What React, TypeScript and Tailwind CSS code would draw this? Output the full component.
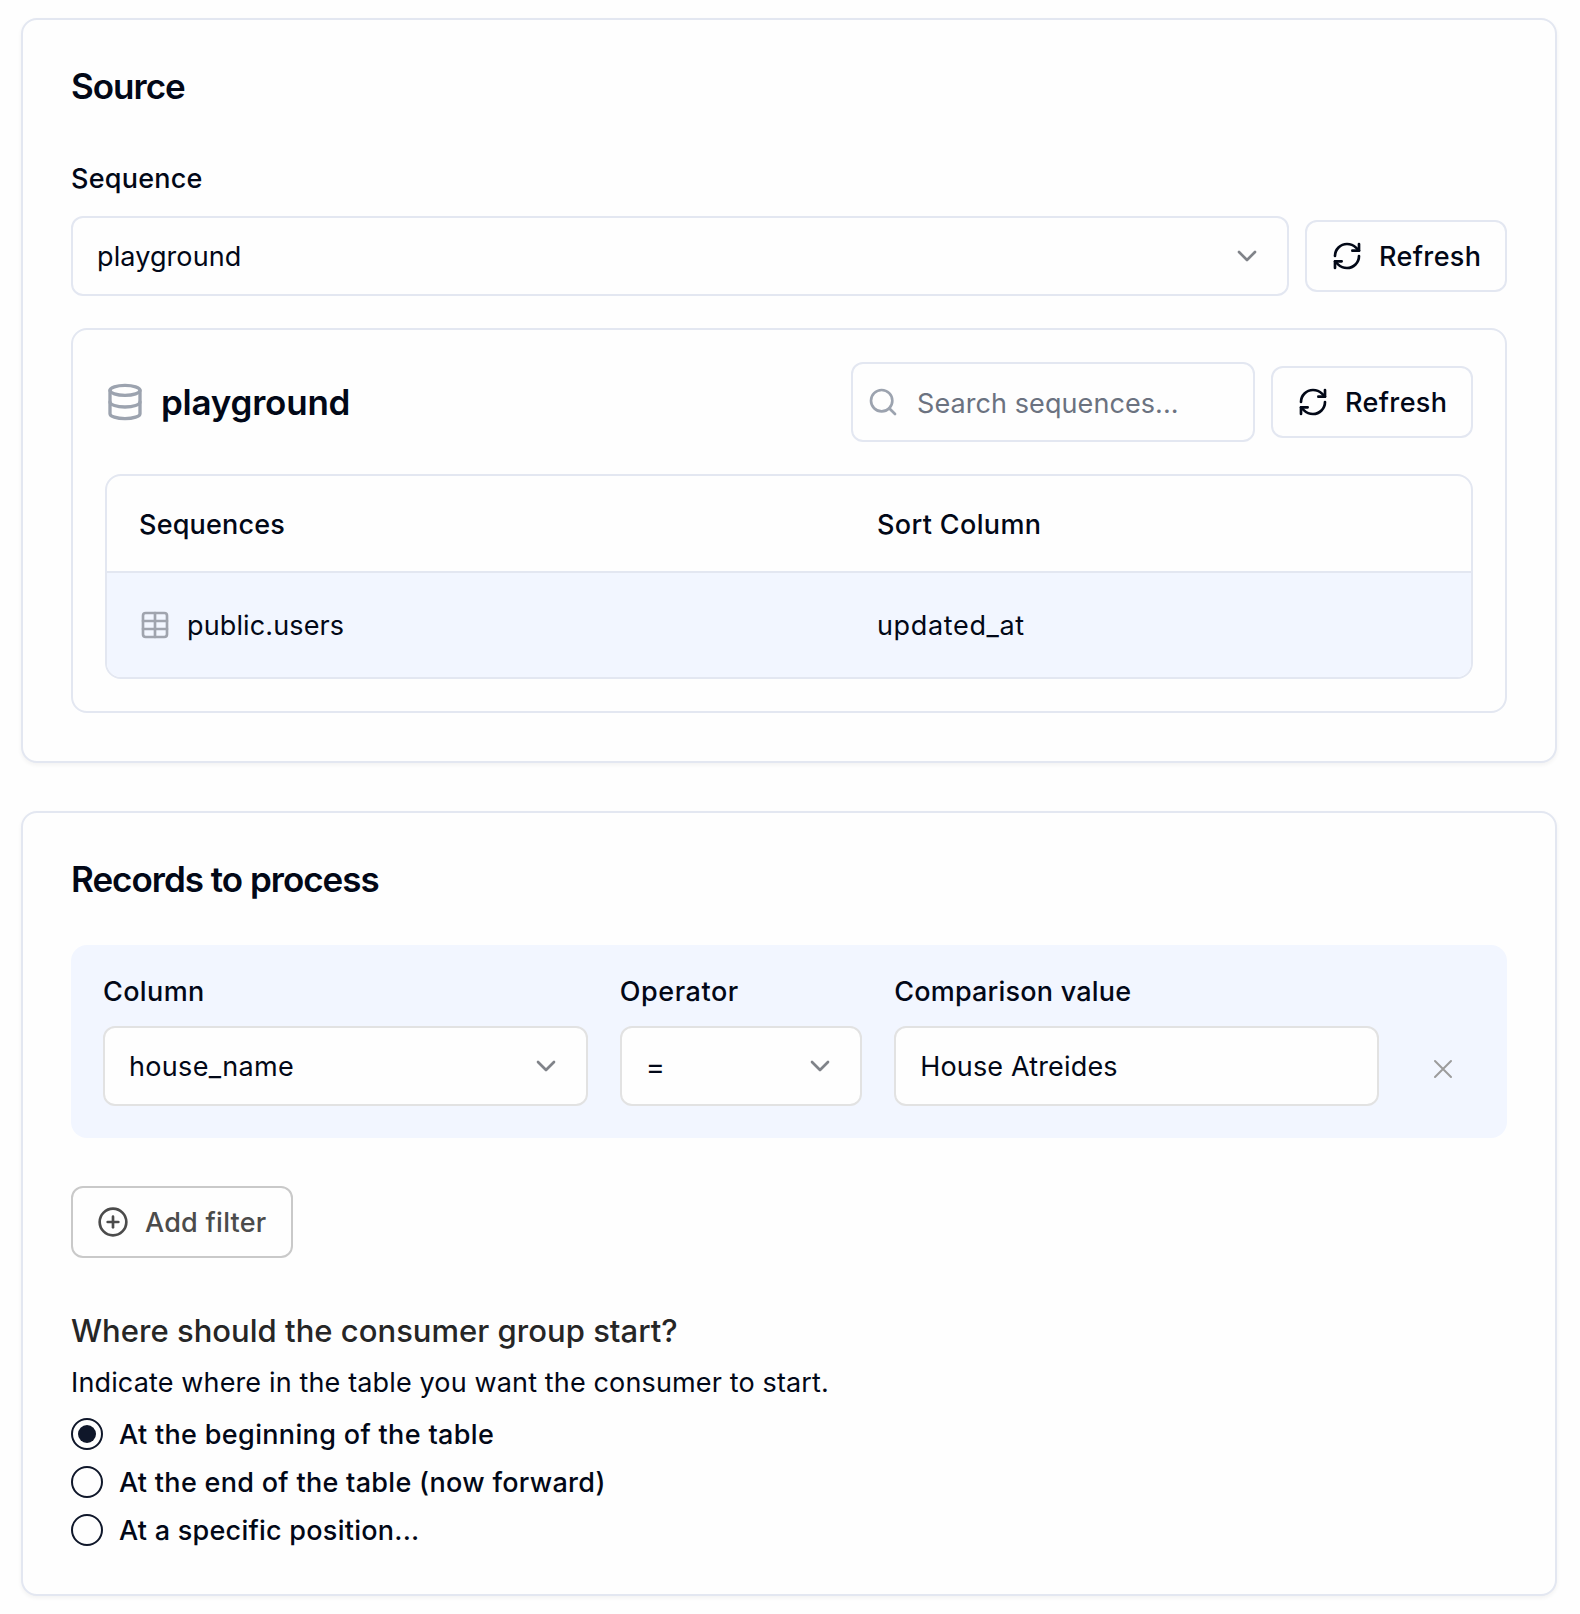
import type { ReactNode } from "react";
import { ChevronDown, CirclePlus, Database, RefreshCw, Search, Table } from "lucide-react";

function Card({ title, children }: { title: ReactNode; children: ReactNode }) {
  return (
    <section className="rounded-2xl border-2 border-[#e3e7f1] bg-[#fefefe] p-12 shadow-[0_2px_4px_rgba(0,0,0,0.05)]">
      {title}
      {children}
    </section>
  );
}

function RefreshButton() {
  return (
    <button className="flex h-[72px] w-[202px] shrink-0 items-center gap-4 rounded-xl border-2 border-[#e3e7f1] bg-[#fefefe] pl-6 font-medium tracking-[0.37px]">
      <RefreshCw size={32} className="shrink-0" />
      <span className="pt-0.5">Refresh</span>
    </button>
  );
}

function FilterSelect({ children }: { children: ReactNode }) {
  return (
    <div className="flex h-20 items-center justify-between rounded-xl border-2 border-[#e2e2e2] bg-[#fefefe] px-6">
      {children}
      <ChevronDown size={32} className="text-[#808389]" />
    </div>
  );
}

function RadioOption({ checked = false, children }: { checked?: boolean; children: ReactNode }) {
  return (
    <div role="radio" aria-checked={checked} className="flex h-8 items-center gap-4 font-medium">
      <span className="flex size-8 items-center justify-center rounded-full border-2 border-[#0f172a]">
        {checked && <span className="size-[18.67px] rounded-full bg-[#0f172a]" />}
      </span>
      {children}
    </div>
  );
}

export default function App() {
  return (
    <main className="flex h-[1614px] w-[1580px] flex-col gap-12 bg-[#fefefe] pt-[18px] pr-[23px] pl-[21px] font-['Inter',sans-serif] text-[27px] leading-7 text-[#020817]">
      <Card title={<h2 className="text-[35px] leading-9 font-semibold tracking-[-1px]">Source</h2>}>
        <div className="mt-[61px] font-medium tracking-[0.24px]">Sequence</div>
        <div className="mt-[23px] flex items-center gap-4">
          <div className="flex h-20 grow items-center justify-between rounded-xl border-2 border-[#e3e7f1] px-6">
            <span className="pt-0.5 tracking-[0.1px]">playground</span>
            <ChevronDown size={32} className="text-[#808389]" />
          </div>
          <RefreshButton />
        </div>

        <div className="mt-8 rounded-2xl border-2 border-[#e3e7f1] p-8">
          <div className="flex items-center">
            <Database size={40} className="text-[#9ca3af]" />
            <h3 className="ml-4 grow text-[35px] leading-10 font-semibold tracking-[-0.23px]">playground</h3>
            <div className="mr-4 flex h-20 w-[404px] items-center rounded-xl border-2 border-[#e3e7f1] pl-3.5">
              <Search size={32} className="text-[#9ca3af]" />
              <span className="ml-[18px] pt-1 tracking-[0.08px] text-[#6b7280]">Search sequences...</span>
            </div>
            <RefreshButton />
          </div>

          <div className="mt-8 overflow-hidden rounded-2xl border-2 border-[#e3e7f1]">
            <div className="grid h-[97px] grid-cols-[738px_1fr] items-center border-b-2 border-[#e3e7f1] px-8 font-medium">
              <span className="pt-[3px] tracking-[0.19px]">Sequences</span>
              <span className="pt-[3px] tracking-[0.36px]">Sort Column</span>
            </div>
            <div className="grid h-[104px] grid-cols-[738px_1fr] items-center bg-[#f2f6ff] px-8">
              <div className="flex items-center gap-4">
                <Table size={32} className="text-[#a0a4ae]" />
                <span className="pt-0.5 tracking-[0.13px]">public.users</span>
              </div>
              <span className="pt-0.5 tracking-[0.65px]">updated_at</span>
            </div>
          </div>
        </div>
      </Card>

      <Card title={<h2 className="text-[35px] leading-9 font-semibold tracking-[-1px]">Records to process</h2>}>
        <div className="mt-12 grid grid-cols-[2fr_1fr_2fr_64px] gap-x-8 rounded-2xl bg-[#f2f6ff] px-8 pt-[33px] pb-8">
          <div className="flex flex-col gap-5">
            <span className="font-medium tracking-[0.37px]">Column</span>
            <FilterSelect>
              <span className="pt-0.5 tracking-[0.33px]">house_name</span>
            </FilterSelect>
          </div>
          <div className="flex flex-col gap-5">
            <span className="font-medium tracking-[0.55px]">Operator</span>
            <FilterSelect>
              <span className="pt-0.5 text-[29px]">=</span>
            </FilterSelect>
          </div>
          <div className="flex flex-col gap-5">
            <span className="font-medium tracking-[0.2px]">Comparison value</span>
            <div className="flex h-20 items-center rounded-xl border-2 border-[#e2e2e2] bg-[#fefefe] px-6 pt-0.5 tracking-[0.16px]">
              House Atreides
            </div>
          </div>
          <button className="mb-[21px] self-end justify-self-center" aria-label="Remove filter">
            <svg width="32" height="32" viewBox="0 0 24 24" fill="none" stroke="#9c9c9c" strokeWidth="1.5" strokeLinecap="round">
              <path d="M6 18 18 6M6 6l12 12" />
            </svg>
          </button>
        </div>

        <button className="mt-12 flex h-[72px] w-[222px] items-center gap-4 rounded-xl border-2 border-[#c9c9c9] pl-6 font-medium tracking-[0.25px] text-[#4b4b4b]">
          <CirclePlus size={32} strokeWidth={2} className="shrink-0" />
          <span className="pt-0.5">Add filter</span>
        </button>

        <h3 className="mt-[53px] text-[31px] leading-10 font-medium tracking-[0.02px] text-[#262626]">
          Where should the consumer group start?
        </h3>
        <p className="mt-3 leading-10 tracking-[0.14px]">Indicate where in the table you want the consumer to start.</p>
        <div role="radiogroup" className="mt-[15px] flex flex-col gap-4">
          <RadioOption checked>
            <span className="pt-0.5 tracking-[0.34px]">At the beginning of the table</span>
          </RadioOption>
          <RadioOption>
            <span className="pt-0.5 tracking-[0.3px]">At the end of the table (now forward)</span>
          </RadioOption>
          <RadioOption>
            <span className="pt-0.5 tracking-[0.25px]">At a specific position...</span>
          </RadioOption>
        </div>
      </Card>
    </main>
  );
}
